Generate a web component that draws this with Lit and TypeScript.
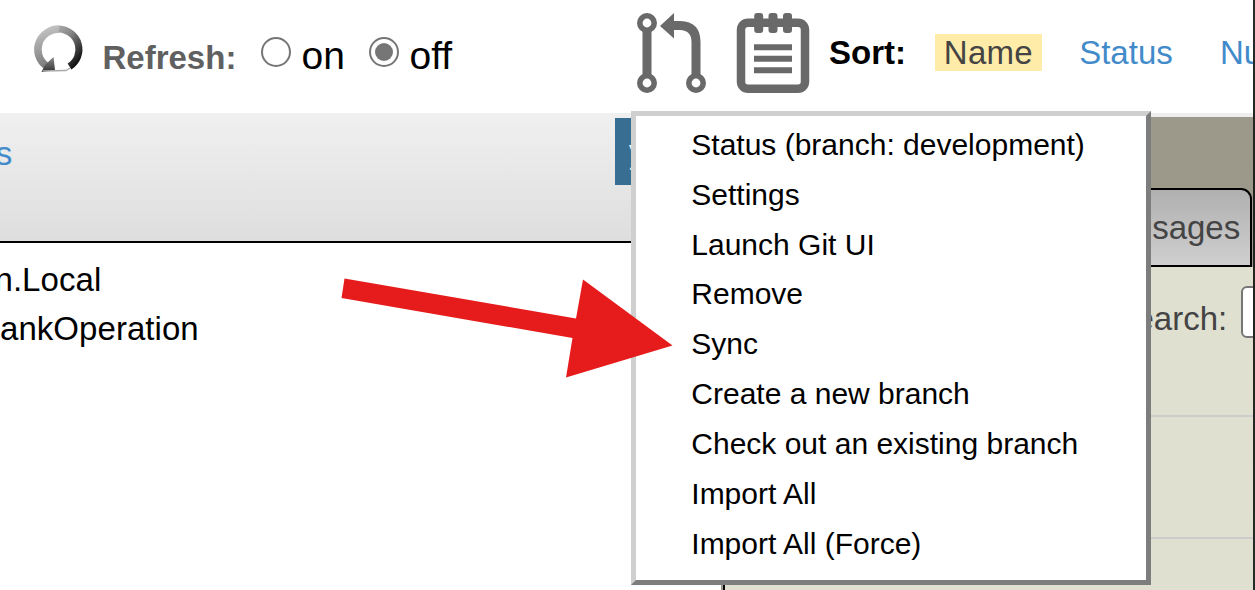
import { LitElement, html, css } from "lit";
import { customElement } from "lit/decorators.js";

const ACTIONS = [
  "Status (branch: development)", "Settings", "Launch Git UI", "Remove", "Sync",
  "Create a new branch", "Check out an existing branch", "Import All", "Import All (Force)",
];

@customElement("app-root")
export class AppRoot extends LitElement {
  static styles = css`
    :host { display: block; position: relative; width: 1255px; height: 590px; overflow: hidden; background: #fff;
      font: 33px/38px "Liberation Sans", Arial, sans-serif; color: #000; white-space: nowrap; }
    * { box-sizing: border-box; }
    svg { display: block; flex: none; }
    .window { display: flex; width: 1255px; height: 590px; }
    .page { width: 1253px; height: 590px; overflow: hidden; }
    .edge { width: 2px; background: linear-gradient(#2b2b2e, #20221f 33%, #252b28); }
    .top { display: flex; height: 113px; width: 1400px; align-items: flex-start; }
    .refresh-icon { margin: 20px 0 0 30px; }
    .refresh { font-weight: bold; color: #606060; width: 158px; margin: 39px 0 0 12.5px; }
    .radio { width: 30px; height: 30px; border: 2.2px solid #767676; border-radius: 50%; margin-top: 37px; flex: none; display: grid; place-items: center; }
    .dot { width: 18px; height: 18px; border-radius: 50%; background: #767676; }
    .choice { font-size: 39px; line-height: 44px; margin: 34px 0 0 11px; width: 67px; letter-spacing: 0; }
    .choice.off { width: 226px; }
    .git { margin-top: 12px; }
    .notes { margin: 12px 0 0 26px; }
    .sort { font-weight: bold; margin: 34px 0 0 19.5px; width: 105.5px; }
    .name { background: #ffeca8; color: #444; height: 37px; width: 107px; margin-top: 34px; padding-left: 9.3px; letter-spacing: .3px; }
    .link { color: #428bca; margin: 34px 0 0 37.7px; width: 103px; }
    .body { display: flex; height: 477px; }
    .left { width: 723px; border-right: 2px solid #9c998b; overflow: hidden; flex: none; }
    .bar { display: flex; justify-content: space-between; height: 130px; border-bottom: 2px solid #000; background: linear-gradient(#f0f0f0, #dedede); }
    .s { color: #428bca; margin: 22px 0 0 -4.3px; }
    .button { height: 67px; width: 106px; margin-top: 5px; background: #376e91; color: #fff; padding: 15px 0 0 14px; }
    .item { height: 49px; line-height: 49px; padding-top: 12px; letter-spacing: .05px; }
    .item.first { margin-left: -5.5px; }
    .right { flex: 1; border-top: 4px solid #eee; display: flex; flex-direction: column; background: #9c998b; }
    .tab { flex: none; align-self: flex-end; width: 180px; height: 79px; margin: 71px 1px 0 0; padding: 19px 10px 0 0; text-align: right; color: #444;
      border: 2px solid #000; border-right-width: 2.5px; border-top-right-radius: 11px; background: linear-gradient(#b0b0b0, #cfcfcf); }
    .panel { flex: 1; min-height: 0; overflow: hidden; background: #dfe0d0; border-left: 2px solid #000; }
    .search { display: flex; height: 148px; padding-left: 410.5px; color: #444; padding-top: 33px; }
    .input { width: 60px; height: 52px; border: 2px solid #767676; border-radius: 6px; background: #fff; margin: -14px -48px 0 14px; flex: none; }
    .row { height: 122px; border-top: 2px solid #ccc; }
    .menu { position: absolute; left: 631px; top: 111px; width: 520px; height: 474px; background: #fff; border: 5px solid;
      border-color: #cfcfcf #7d7d7d #7d7d7d #cfcfcf; padding: 3.8px 0 0 55.3px; font-size: 30px; line-height: 49.9px; }
    .action { height: 49.9px; }
    .arrow { position: absolute; left: 0; top: 0; }
  `;

  render() {
    return html`
      <div class="window">
        <div class="page">
          <div class="top">
            <svg class="refresh-icon" width="60" height="58" viewBox="30 20 60 58">
              <defs><linearGradient id="g" gradientUnits="userSpaceOnUse" x1="42" y1="28" x2="80" y2="60">
                <stop stop-color="#c4c4c4"/><stop offset=".5" stop-color="#888"/><stop offset="1" stop-color="#111"/></linearGradient>
                <linearGradient id="k" gradientUnits="userSpaceOnUse" x1="36" y1="30" x2="48" y2="68">
                <stop stop-color="#c4c4c4"/><stop offset="1" stop-color="#777"/></linearGradient>
                <linearGradient id="h" x1="0" y1="0" x2="0" y2="1"><stop stop-color="#888"/><stop offset="1" stop-color="#333"/></linearGradient>
                <filter id="soft"><feGaussianBlur stdDeviation=".7"/></filter></defs>
              <g filter="url(#soft)">
                <path d="M59.5 29A21.3 20.5 0 0 0 46.5 66" fill="none" stroke="url(#k)" stroke-width="7.5"/>
                <path d="M59 29A21.3 20.5 0 0 1 69.5 66.5" fill="none" stroke="url(#g)" stroke-width="7"/>
                <path d="M53.5 57L55 70L41.5 72L45 65Z" fill="url(#h)"/>
                <path d="M43 71L66 70.5L70 68" fill="none" stroke="#aaa" stroke-width="1.3"/>
              </g>
            </svg>
            <span class="refresh">Refresh:</span>
            <span class="radio"></span><span class="choice">on</span>
            <span class="radio"><span class="dot"></span></span><span class="choice off">off</span>
            <svg class="git" width="72" height="84" viewBox="636 12 72 84">
              <g fill="none" stroke="#696969">
                <circle cx="647" cy="23" r="7.2" stroke-width="5.6"/><circle cx="647" cy="83" r="7.2" stroke-width="5.6"/><circle cx="696" cy="83" r="7.2" stroke-width="5.6"/>
                <path d="M647 29V76M673 25.5H680Q696 26 696 42V76" stroke-width="9"/>
              </g>
              <path d="M660 26L674 13V38.5Z" fill="#696969"/>
            </svg>
            <svg class="notes" width="76" height="84" viewBox="734 12 76 84">
              <rect x="741" y="22.8" width="64" height="66" rx="7" fill="none" stroke="#696969" stroke-width="8.5"/>
              <path d="M754 47.3H792M754 58.8H792M754 70.2H792" stroke="#696969" stroke-width="6"/>
              <g fill="#696969"><rect x="754.2" y="13" width="9" height="20" rx="3"/><rect x="768.5" y="13" width="9" height="20" rx="3"/><rect x="783" y="13" width="9" height="20" rx="3"/></g>
            </svg>
            <span class="sort">Sort:</span><span class="name">Name</span>
            <span class="link">Status</span><span class="link">Number</span>
          </div>
          <div class="body">
            <div class="left">
              <div class="bar"><span class="s">s</span><span class="button">y</span></div>
              <div class="item first">n.Local</div>
              <div class="item">ankOperation</div>
            </div>
            <div class="right">
              <div class="tab">sages</div>
              <div class="panel">
                <div class="search"><span>earch:</span><span class="input"></span></div>
                <div class="row"></div><div class="row"></div>
              </div>
            </div>
          </div>
        </div>
        <div class="edge"></div>
      </div>
      <div class="menu">${ACTIONS.map((a) => html`<div class="action">${a}</div>`)}</div>
      <svg class="arrow" width="1255" height="590" viewBox="0 0 1255 590">
        <path d="M344.5 278.5L576 318.5L583 279.5L672.5 345.5L566 377.5L572.5 338L341.5 298Z" fill="#e61c1c"/>
      </svg>
    `;
  }
}
